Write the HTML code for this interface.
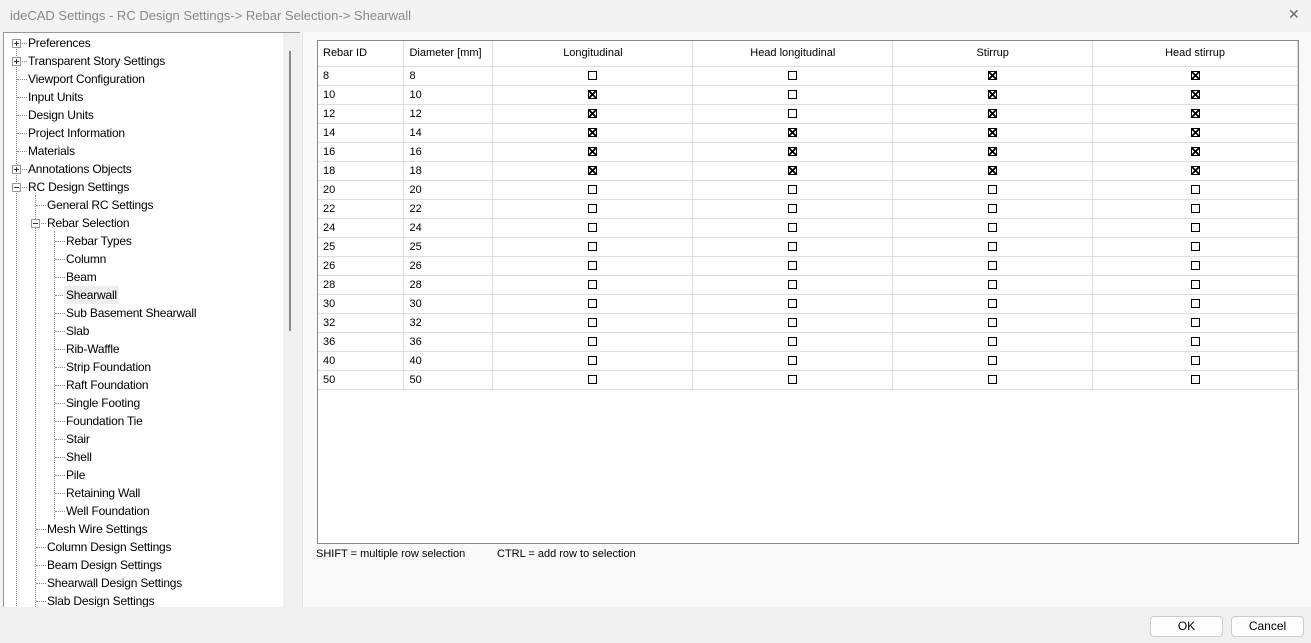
<!DOCTYPE html>
<html><head><meta charset="utf-8"><style>
*{margin:0;padding:0;box-sizing:border-box}
body{width:1311px;height:643px;background:#f3f3f3;font-family:"Liberation Sans",sans-serif;font-size:12px;color:#000;position:relative;overflow:hidden}
.title{position:absolute;left:10px;top:8px;font-size:13px;color:#888}
.close{position:absolute;left:1288px;top:6px;font-size:14px;color:#666}
.tree{position:absolute;left:3px;top:32px;width:297px;height:575px;background:#fff;border-top:1px solid #999;border-left:1px solid #999;overflow:hidden}
.sb{position:absolute;left:279px;top:0;width:18px;height:575px;background:#f0f0f0}
.thumb{position:absolute;left:6px;top:18px;width:2px;height:280px;background:#888}
.it{position:absolute;height:18px;line-height:18px;white-space:nowrap;letter-spacing:-0.2px}
.vl{position:absolute;border-left:1px dotted #888;width:0}
.hl{position:absolute;border-top:1px dotted #888;height:0}
.pb{position:absolute;width:9px;height:9px;border:1px solid #999;background:#fff}
.pb:before{content:"";position:absolute;left:1px;top:3px;width:5px;height:1px;background:#333}
.pb.p:after{content:"";position:absolute;left:3px;top:1px;width:1px;height:5px;background:#333}
.right{position:absolute;left:302px;top:32px;width:1009px;height:575px;background:#f9f9f9;border-left:1px solid #e4e4e4}
table{position:absolute;left:318px;top:41px;border-collapse:collapse;background:#fff;width:980px}
.tb{position:absolute;left:317px;top:40px;width:982px;height:504px;background:#fff;border:1px solid #888}
td,th{height:19px;border-right:1px solid #ddd;border-bottom:1px solid #ddd;font-weight:normal;font-size:11px;padding:0 5px;text-align:left}
th{height:25px;font-size:11px}
td.c,th.c{text-align:center;padding:0}
.cb{display:inline-block;width:9px;height:9px;border:1px solid #000;vertical-align:middle;position:relative}
.x{background:linear-gradient(45deg,transparent 42%,#000 42%,#000 58%,transparent 58%),linear-gradient(-45deg,transparent 42%,#000 42%,#000 58%,transparent 58%)}
.hint{position:absolute;top:548px;font-size:11px}
.foot{position:absolute;left:0;top:607px;width:1311px;height:36px;background:#f0f0f0}
.btn{position:absolute;top:616px;width:73px;height:21px;border:1px solid #ccc;border-radius:4px;background:#fdfdfd;text-align:center;line-height:19px;font-size:12px}
</style></head><body>
<div class="title">ideCAD Settings - RC Design Settings-&gt; Rebar Selection-&gt; Shearwall</div>
<div class="close">✕</div>
<div class="tree">
<div class="vl" style="left:12px;top:8px;height:575px"></div>
<div class="vl" style="left:31px;top:162px;height:420px"></div>
<div class="vl" style="left:50px;top:198px;height:288px"></div>
<div class="hl" style="left:13px;top:10px;width:10px"></div>
<div class="hl" style="left:13px;top:28px;width:10px"></div>
<div class="hl" style="left:13px;top:46px;width:10px"></div>
<div class="hl" style="left:13px;top:64px;width:10px"></div>
<div class="hl" style="left:13px;top:82px;width:10px"></div>
<div class="hl" style="left:13px;top:100px;width:10px"></div>
<div class="hl" style="left:13px;top:118px;width:10px"></div>
<div class="hl" style="left:13px;top:136px;width:10px"></div>
<div class="hl" style="left:13px;top:154px;width:10px"></div>
<div class="hl" style="left:32px;top:172px;width:10px"></div>
<div class="hl" style="left:32px;top:190px;width:10px"></div>
<div class="hl" style="left:32px;top:496px;width:10px"></div>
<div class="hl" style="left:32px;top:514px;width:10px"></div>
<div class="hl" style="left:32px;top:532px;width:10px"></div>
<div class="hl" style="left:32px;top:550px;width:10px"></div>
<div class="hl" style="left:32px;top:568px;width:10px"></div>
<div class="hl" style="left:51px;top:208px;width:10px"></div><div class="hl" style="left:51px;top:226px;width:10px"></div><div class="hl" style="left:51px;top:244px;width:10px"></div><div class="hl" style="left:51px;top:262px;width:10px"></div><div class="hl" style="left:51px;top:280px;width:10px"></div><div class="hl" style="left:51px;top:298px;width:10px"></div><div class="hl" style="left:51px;top:316px;width:10px"></div><div class="hl" style="left:51px;top:334px;width:10px"></div><div class="hl" style="left:51px;top:352px;width:10px"></div><div class="hl" style="left:51px;top:370px;width:10px"></div><div class="hl" style="left:51px;top:388px;width:10px"></div><div class="hl" style="left:51px;top:406px;width:10px"></div><div class="hl" style="left:51px;top:424px;width:10px"></div><div class="hl" style="left:51px;top:442px;width:10px"></div><div class="hl" style="left:51px;top:460px;width:10px"></div><div class="hl" style="left:51px;top:478px;width:10px"></div>
<div class="pb p" style="left:8px;top:6px"></div>
<div class="pb p" style="left:8px;top:24px"></div>
<div class="pb p" style="left:8px;top:132px"></div>
<div class="pb" style="left:8px;top:150px"></div>
<div class="pb" style="left:27px;top:186px"></div>
<div class="it" style="left:24px;top:1px">Preferences</div>
<div class="it" style="left:24px;top:19px">Transparent Story Settings</div>
<div class="it" style="left:24px;top:37px">Viewport Configuration</div>
<div class="it" style="left:24px;top:55px">Input Units</div>
<div class="it" style="left:24px;top:73px">Design Units</div>
<div class="it" style="left:24px;top:91px">Project Information</div>
<div class="it" style="left:24px;top:109px">Materials</div>
<div class="it" style="left:24px;top:127px">Annotations Objects</div>
<div class="it" style="left:24px;top:145px">RC Design Settings</div>
<div class="it" style="left:43px;top:163px">General RC Settings</div>
<div class="it" style="left:43px;top:181px">Rebar Selection</div>
<div class="it" style="left:62px;top:199px">Rebar Types</div>
<div class="it" style="left:62px;top:217px">Column</div>
<div class="it" style="left:62px;top:235px">Beam</div>
<div class="it" style="left:60px;top:253px;background:#eee;padding:0 2px">Shearwall</div>
<div class="it" style="left:62px;top:271px">Sub Basement Shearwall</div>
<div class="it" style="left:62px;top:289px">Slab</div>
<div class="it" style="left:62px;top:307px">Rib-Waffle</div>
<div class="it" style="left:62px;top:325px">Strip Foundation</div>
<div class="it" style="left:62px;top:343px">Raft Foundation</div>
<div class="it" style="left:62px;top:361px">Single Footing</div>
<div class="it" style="left:62px;top:379px">Foundation Tie</div>
<div class="it" style="left:62px;top:397px">Stair</div>
<div class="it" style="left:62px;top:415px">Shell</div>
<div class="it" style="left:62px;top:433px">Pile</div>
<div class="it" style="left:62px;top:451px">Retaining Wall</div>
<div class="it" style="left:62px;top:469px">Well Foundation</div>
<div class="it" style="left:43px;top:487px">Mesh Wire Settings</div>
<div class="it" style="left:43px;top:505px">Column Design Settings</div>
<div class="it" style="left:43px;top:523px">Beam Design Settings</div>
<div class="it" style="left:43px;top:541px">Shearwall Design Settings</div>
<div class="it" style="left:43px;top:559px">Slab Design Settings</div>
<div class="sb"><div class="thumb"></div></div>
</div>
<div class="right"></div>
<div class="tb"></div>
<table>
<colgroup><col style="width:86px"><col style="width:89px"><col style="width:200px"><col style="width:200px"><col style="width:200px"><col style="width:205px"></colgroup>
<tr><th>Rebar ID</th><th>Diameter [mm]</th><th class="c">Longitudinal</th><th class="c">Head longitudinal</th><th class="c">Stirrup</th><th class="c">Head stirrup</th></tr>
<tr><td>8</td><td>8</td><td class="c"><span class="cb"></span></td><td class="c"><span class="cb"></span></td><td class="c"><span class="cb x"></span></td><td class="c"><span class="cb x"></span></td></tr>
<tr><td>10</td><td>10</td><td class="c"><span class="cb x"></span></td><td class="c"><span class="cb"></span></td><td class="c"><span class="cb x"></span></td><td class="c"><span class="cb x"></span></td></tr>
<tr><td>12</td><td>12</td><td class="c"><span class="cb x"></span></td><td class="c"><span class="cb"></span></td><td class="c"><span class="cb x"></span></td><td class="c"><span class="cb x"></span></td></tr>
<tr><td>14</td><td>14</td><td class="c"><span class="cb x"></span></td><td class="c"><span class="cb x"></span></td><td class="c"><span class="cb x"></span></td><td class="c"><span class="cb x"></span></td></tr>
<tr><td>16</td><td>16</td><td class="c"><span class="cb x"></span></td><td class="c"><span class="cb x"></span></td><td class="c"><span class="cb x"></span></td><td class="c"><span class="cb x"></span></td></tr>
<tr><td>18</td><td>18</td><td class="c"><span class="cb x"></span></td><td class="c"><span class="cb x"></span></td><td class="c"><span class="cb x"></span></td><td class="c"><span class="cb x"></span></td></tr>
<tr><td>20</td><td>20</td><td class="c"><span class="cb"></span></td><td class="c"><span class="cb"></span></td><td class="c"><span class="cb"></span></td><td class="c"><span class="cb"></span></td></tr>
<tr><td>22</td><td>22</td><td class="c"><span class="cb"></span></td><td class="c"><span class="cb"></span></td><td class="c"><span class="cb"></span></td><td class="c"><span class="cb"></span></td></tr>
<tr><td>24</td><td>24</td><td class="c"><span class="cb"></span></td><td class="c"><span class="cb"></span></td><td class="c"><span class="cb"></span></td><td class="c"><span class="cb"></span></td></tr>
<tr><td>25</td><td>25</td><td class="c"><span class="cb"></span></td><td class="c"><span class="cb"></span></td><td class="c"><span class="cb"></span></td><td class="c"><span class="cb"></span></td></tr>
<tr><td>26</td><td>26</td><td class="c"><span class="cb"></span></td><td class="c"><span class="cb"></span></td><td class="c"><span class="cb"></span></td><td class="c"><span class="cb"></span></td></tr>
<tr><td>28</td><td>28</td><td class="c"><span class="cb"></span></td><td class="c"><span class="cb"></span></td><td class="c"><span class="cb"></span></td><td class="c"><span class="cb"></span></td></tr>
<tr><td>30</td><td>30</td><td class="c"><span class="cb"></span></td><td class="c"><span class="cb"></span></td><td class="c"><span class="cb"></span></td><td class="c"><span class="cb"></span></td></tr>
<tr><td>32</td><td>32</td><td class="c"><span class="cb"></span></td><td class="c"><span class="cb"></span></td><td class="c"><span class="cb"></span></td><td class="c"><span class="cb"></span></td></tr>
<tr><td>36</td><td>36</td><td class="c"><span class="cb"></span></td><td class="c"><span class="cb"></span></td><td class="c"><span class="cb"></span></td><td class="c"><span class="cb"></span></td></tr>
<tr><td>40</td><td>40</td><td class="c"><span class="cb"></span></td><td class="c"><span class="cb"></span></td><td class="c"><span class="cb"></span></td><td class="c"><span class="cb"></span></td></tr>
<tr><td>50</td><td>50</td><td class="c"><span class="cb"></span></td><td class="c"><span class="cb"></span></td><td class="c"><span class="cb"></span></td><td class="c"><span class="cb"></span></td></tr>
</table>
<div class="hint" style="left:316px">SHIFT = multiple row selection</div>
<div class="hint" style="left:497px">CTRL = add row to selection</div>
<div class="foot"></div>
<div class="btn" style="left:1150px">OK</div>
<div class="btn" style="left:1231px">Cancel</div>
</body></html>
